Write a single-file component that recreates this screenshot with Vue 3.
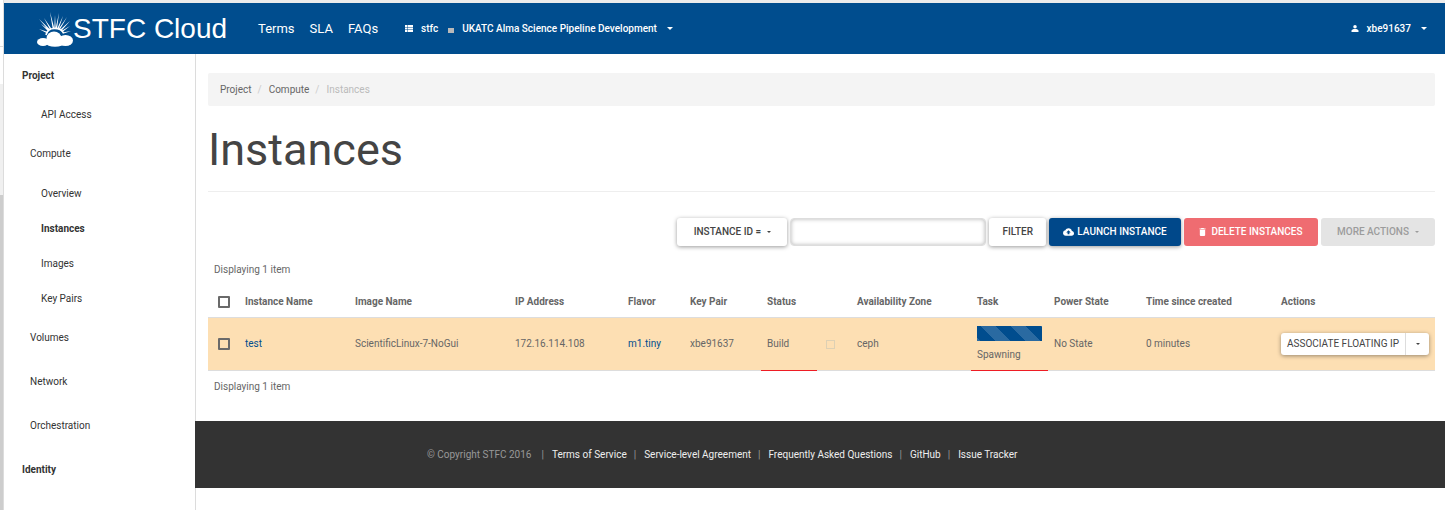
<script setup>
import { ref } from 'vue'

const topLinks = ['Terms', 'SLA', 'FAQs']

const menu = [
  { label: 'Project', level: 'dashboard' },
  { label: 'API Access', level: 'panel' },
  { label: 'Compute', level: 'group' },
  { label: 'Overview', level: 'panel' },
  { label: 'Instances', level: 'panel', active: true },
  { label: 'Images', level: 'panel' },
  { label: 'Key Pairs', level: 'panel' },
  { label: 'Volumes', level: 'group' },
  { label: 'Network', level: 'group' },
  { label: 'Orchestration', level: 'group' },
  { label: 'Identity', level: 'dashboard' }
]

const footerLinks = [
  'Terms of Service',
  'Service-level Agreement',
  'Frequently Asked Questions',
  'GitHub',
  'Issue Tracker'
]

const instances = ref([
  {
    name: 'test',
    image: 'ScientificLinux-7-NoGui',
    ip: '172.16.114.108',
    flavor: 'm1.tiny',
    keyPair: 'xbe91637',
    status: 'Build',
    zone: 'ceph',
    task: 'Spawning',
    power: 'No State',
    age: '0 minutes'
  }
])

const query = ref('')
</script>

<template>
  <div class="page">
    <div class="edge" aria-hidden="true">
      <span class="edge-top"></span>
      <span class="edge-mid"></span>
      <span class="edge-thumb"></span>
    </div>

    <div class="app">
      <header class="topbar">
        <a class="brand" href="#">
          <svg class="logo" viewBox="0 0 36 36" aria-hidden="true">
            <g fill="#fff">
              <path d="M2 8l9.900 11.800 1.200-1.200zM7 7l6.100 11.500 1.400-.8zM13 1l2.600 16.300 1.600-.2zM18 4l-.7 13h1.400zM22 2l-3.300 15 1.400.2zM26 5l-5.700 12.300 1.400.6zM30 6l-8.300 11.800 1.200.8zM33 10l-9.900 8.700 1.200 1.200zM33 15l-8.700 4.900.8 1.400zM4 13l7.300 7.500 1.100-1.400zM2 18l8.400 4.600.6-1.600zM34 20l-8.500 1.500.4 1.300z" />
              <path d="M9 24c1-4.500 4.300-6.500 8.500-6.500S25 19 26.500 22" fill="none" stroke="#fff" stroke-width="1.600" />
              <ellipse cx="6" cy="31" rx="6" ry="4" />
              <ellipse cx="17" cy="27.500" rx="7.500" ry="7" />
              <ellipse cx="28.500" cy="29.500" rx="7.500" ry="5.500" />
              <ellipse cx="18" cy="32" rx="9" ry="3.800" />
            </g>
          </svg>
          <span>STFC Cloud</span>
        </a>
        <nav class="toplinks">
          <a v-for="link in topLinks" :key="link" href="#">{{ link }}</a>
        </nav>
        <button class="bar-button context" type="button">
          <svg class="list-icon" viewBox="0 0 8 7" aria-hidden="true">
            <path fill="#fff" d="M0 0h2v2H0zM2.500 0H8v2H2.500zM0 2.500h2v2H0zM2.500 2.500H8v2H2.500zM0 5h2v2H0zM2.500 5H8v2H2.500z" />
          </svg>
          <span>stfc</span>
          <i class="square"></i>
          <span>UKATC Alma Science Pipeline Development</span>
          <i class="caret"></i>
        </button>
        <button class="bar-button user" type="button">
          <svg class="user-icon" viewBox="0 0 8 8" aria-hidden="true">
            <circle cx="4" cy="2" r="2" fill="#fff" />
            <path fill="#fff" d="M0 8V6.500C0 5.300 2 4.700 4 4.700s4 .6 4 1.800V8z" />
          </svg>
          <span>xbe91637</span>
          <i class="caret"></i>
        </button>
      </header>

      <div class="body">
        <nav class="sidebar">
          <a
            v-for="item in menu"
            :key="item.label"
            href="#"
            :class="[item.level, { active: item.active }]"
          >{{ item.label }}</a>
        </nav>

        <div class="content">
          <main>
            <ol class="breadcrumb">
              <li><a href="#">Project</a></li>
              <li><a href="#">Compute</a></li>
              <li class="current">Instances</li>
            </ol>

            <h1>Instances</h1>

            <form class="actions" @submit.prevent>
              <button class="btn field" type="button">INSTANCE ID =<i class="caret"></i></button>
              <input v-model="query" class="search" type="text" aria-label="Filter value" />
              <button class="btn" type="submit">FILTER</button>
              <button class="btn primary" type="button">
                <svg class="cloud-icon" viewBox="0 0 24 16" aria-hidden="true">
                  <path fill="#fff" fill-rule="evenodd" d="M19.350 6.040A7.490 7.490 0 0 0 12 0C9.110 0 6.600 1.640 5.350 4.040A5.994 5.994 0 0 0 0 10c0 3.310 2.690 6 6 6h13c2.760 0 5-2.240 5-5 0-2.640-2.050-4.780-4.650-4.960zM14 9v4h-4V9H7l5-5 5 5z" />
                </svg>
                LAUNCH INSTANCE
              </button>
              <button class="btn danger" type="button">
                <svg class="trash-icon" viewBox="0 0 14 18" aria-hidden="true">
                  <path fill="#fff" d="M1 16c0 1.100.9 2 2 2h8c1.100 0 2-.9 2-2V4H1zM14 1h-3.500l-1-1h-5l-1 1H0v2h14z" />
                </svg>
                DELETE INSTANCES
              </button>
              <button class="btn muted" type="button" disabled>MORE ACTIONS<i class="caret"></i></button>
            </form>

            <p class="count">Displaying 1 item</p>
            <table>
              <colgroup>
                <col class="c-check" />
                <col class="c-name" />
                <col class="c-image" />
                <col class="c-ip" />
                <col class="c-flavor" />
                <col class="c-key" />
                <col class="c-status" />
                <col class="c-lock" />
                <col class="c-zone" />
                <col class="c-task" />
                <col class="c-power" />
                <col class="c-time" />
                <col class="c-actions" />
              </colgroup>
              <thead>
                <tr>
                  <th class="check"><input type="checkbox" aria-label="Select all" /></th>
                  <th>Instance Name</th>
                  <th>Image Name</th>
                  <th>IP Address</th>
                  <th>Flavor</th>
                  <th>Key Pair</th>
                  <th>Status</th>
                  <th></th>
                  <th>Availability Zone</th>
                  <th>Task</th>
                  <th>Power State</th>
                  <th>Time since created</th>
                  <th>Actions</th>
                </tr>
              </thead>
              <tbody>
                <tr v-for="row in instances" :key="row.name">
                  <td class="check"><input type="checkbox" :aria-label="`Select ${row.name}`" /></td>
                  <td><a href="#">{{ row.name }}</a></td>
                  <td>{{ row.image }}</td>
                  <td>{{ row.ip }}</td>
                  <td><a href="#">{{ row.flavor }}</a></td>
                  <td>{{ row.keyPair }}</td>
                  <td class="pending">{{ row.status }}</td>
                  <td class="lock"><i></i></td>
                  <td>{{ row.zone }}</td>
                  <td class="pending">
                    <div class="progress"></div>
                    {{ row.task }}
                  </td>
                  <td>{{ row.power }}</td>
                  <td>{{ row.age }}</td>
                  <td>
                    <div class="split">
                      <button type="button">ASSOCIATE FLOATING IP</button>
                      <button class="toggle" type="button" aria-label="More row actions"><i class="caret"></i></button>
                    </div>
                  </td>
                </tr>
              </tbody>
            </table>
            <p class="count">Displaying 1 item</p>
          </main>

          <footer>
            <span class="copyright">© Copyright STFC 2016</span>
            <template v-for="link in footerLinks" :key="link">
              <span class="bar">|</span><a href="#">{{ link }}</a>
            </template>
          </footer>
        </div>
      </div>
    </div>
  </div>
</template>

<style>
body {
  margin: 0;
  background: #fff;
}
</style>

<style scoped>
* {
  box-sizing: border-box;
}

.page {
  display: flex;
  min-height: 100vh;
  font-family: Roboto, "Liberation Sans", sans-serif;
  font-size: 10px;
  line-height: 16px;
  color: #666;
}

a {
  color: inherit;
  text-decoration: none;
}

button,
input {
  font: inherit;
}

button {
  white-space: nowrap;
}

.edge {
  display: flex;
  flex: none;
  flex-direction: column;
  width: 4px;
  border-right: 1px solid #dcdcdc;
}

.edge-top {
  height: 47px;
  border-bottom: 1px solid #dcdcdc;
}

.edge-mid {
  height: 148px;
  background: linear-gradient(#fff 37px, #f0f0f0 37px);
}

.edge-thumb {
  flex: 1;
  background: #cdcdcd;
}

.app {
  display: flex;
  flex: 1;
  flex-direction: column;
  min-width: 0;
  border-top: 3px solid #ececec;
}

.topbar {
  display: flex;
  align-items: center;
  height: 51px;
  padding: 0 18px 0 33px;
  background: #004d8e;
  color: #fff;
}

.brand {
  display: flex;
  align-items: center;
  font-family: "Liberation Sans", Arial, sans-serif;
  font-size: 28px;
  line-height: 36px;
}

.logo {
  width: 36px;
  height: 36px;
}

.toplinks {
  display: flex;
  gap: 15px;
  margin-left: 31px;
  font-size: 13px;
}

.bar-button {
  display: flex;
  align-items: center;
  padding: 0;
  border: 0;
  background: none;
  color: #fff;
  font-weight: 500;
}

.context {
  margin-left: 27px;
}

.list-icon {
  width: 8px;
  height: 7px;
  margin-right: 8px;
}

.square {
  width: 6px;
  height: 5px;
  margin: 4px 8px 0 10px;
  background: #b9b9b9;
}

.user {
  margin-left: auto;
}

.user-icon {
  width: 8px;
  height: 7px;
  margin-right: 8px;
}

.caret {
  display: inline-block;
  border-top: 3px solid;
  border-right: 3px solid transparent;
  border-left: 3px solid transparent;
}

.bar-button .caret {
  margin-left: 10px;
}

.body {
  display: flex;
  flex: 1;
}

.sidebar {
  display: flex;
  flex: none;
  flex-direction: column;
  width: 192px;
  border-right: 1px solid #dcdcdc;
  color: #333;
}

.sidebar a {
  line-height: 35px;
  padding-left: 37px;
}

.sidebar .dashboard {
  line-height: 43px;
  padding-left: 18px;
  font-weight: 700;
}

.sidebar .group {
  line-height: 44px;
  padding-left: 26px;
}

.sidebar .active {
  font-weight: 700;
}

.content {
  flex: 1;
  min-width: 0;
}

main {
  padding: 19px 10px 18px 12px;
}

.breadcrumb {
  display: flex;
  margin: 0;
  padding: 9px 12px 8px;
  border-radius: 2px;
  background: #f4f4f4;
  list-style: none;
}

.breadcrumb li + li::before {
  content: "/";
  padding: 0 7px 0 6px;
  color: #ccc;
}

.breadcrumb .current {
  color: #bbb;
}

h1 {
  margin: 15px 0 26px;
  padding-bottom: 12px;
  border-bottom: 1px solid #eee;
  color: #444;
  font-size: 45px;
  font-weight: 400;
  line-height: 58px;
}

.actions {
  display: flex;
  justify-content: flex-end;
  gap: 3px;
}

.btn {
  display: flex;
  align-items: center;
  justify-content: center;
  height: 28px;
  padding: 0 13px;
  border: 0;
  border-radius: 3px;
  background: #fff;
  box-shadow: 0 1px 4px rgba(0, 0, 0, 0.4);
  color: #444;
  font-weight: 500;
}

.btn .caret {
  margin-left: 6px;
}

.btn .caret,
.split .caret {
  border-width: 2px 2px 0;
}

.field {
  min-width: 110px;
}

.primary {
  min-width: 132px;
  background: #00488a;
  color: #fff;
}

.danger {
  min-width: 134px;
  background: #ef6c71;
  box-shadow: none;
  color: #fff;
}

.muted {
  min-width: 114px;
  background: #e4e4e4;
  box-shadow: none;
  color: #9c9c9c;
}

.cloud-icon {
  width: 11px;
  height: 8px;
  margin-right: 3px;
}

.trash-icon {
  width: 7px;
  height: 8px;
  margin-right: 5px;
}

.search {
  width: 196px;
  height: 28px;
  padding: 0 8px;
  border: 1px solid #ddd;
  border-radius: 4px;
  background: #fff;
  box-shadow: inset 0 0 4px rgba(0, 0, 0, 0.3);
  outline: 0;
}

.count {
  margin: 0;
  padding: 8px 6px;
}

.actions + .count {
  padding-top: 16px;
}

table {
  width: 100%;
  border-collapse: separate;
  border-spacing: 0;
  table-layout: fixed;
}

.c-check { width: 31px; }
.c-name { width: 110px; }
.c-image { width: 160px; }
.c-ip { width: 113px; }
.c-flavor { width: 62px; }
.c-key { width: 77px; }
.c-status { width: 56px; }
.c-lock { width: 34px; }
.c-zone { width: 120px; }
.c-task { width: 77px; }
.c-power { width: 92px; }
.c-time { width: 135px; }
.c-actions { width: 160px; }

th,
td {
  padding: 0 6px;
  border-bottom: 1px solid #ddd;
  text-align: left;
  white-space: nowrap;
}

th {
  height: 32px;
  font-weight: 700;
}

td {
  height: 53px;
  background: #fddfb3;
}

td a {
  color: #004d8e;
}

.check {
  padding-left: 10px;
}

.check input {
  display: block;
  width: 12px;
  height: 12px;
  margin: 0;
  border: 2px solid #6a6a6a;
  border-radius: 1px;
  appearance: none;
}

td.pending {
  border-bottom: 1px solid #ee1c24;
}

.lock i {
  display: block;
  width: 9px;
  height: 9px;
  margin-left: 3px;
  border: 1px solid #ddd0b4;
}

.progress {
  height: 15px;
  margin-bottom: 6px;
  background-color: #004d8e;
  background-image: linear-gradient(45deg, #2a6aa1 25%, transparent 25%, transparent 50%, #2a6aa1 50%, #2a6aa1 75%, transparent 75%);
  background-position: 4px 0;
  background-size: 30px 30px;
}

.split {
  display: flex;
  height: 22px;
  border-radius: 3px;
  background: #fff;
  box-shadow: 0 1px 4px rgba(0, 0, 0, 0.4);
}

.split button {
  flex: 1;
  padding: 0;
  border: 0;
  background: none;
  color: #444;
}

.split .toggle {
  display: flex;
  flex: none;
  align-items: center;
  justify-content: center;
  width: 24px;
  border-left: 1px solid #ddd;
}

footer {
  display: flex;
  align-items: center;
  height: 67px;
  margin-left: -1px;
  padding-left: 232px;
  background: #333;
  color: #999;
}

footer a {
  color: #eee;
}

footer .bar {
  margin: 0 8px 0 7px;
}

.copyright {
  margin-right: 3px;
}
</style>
